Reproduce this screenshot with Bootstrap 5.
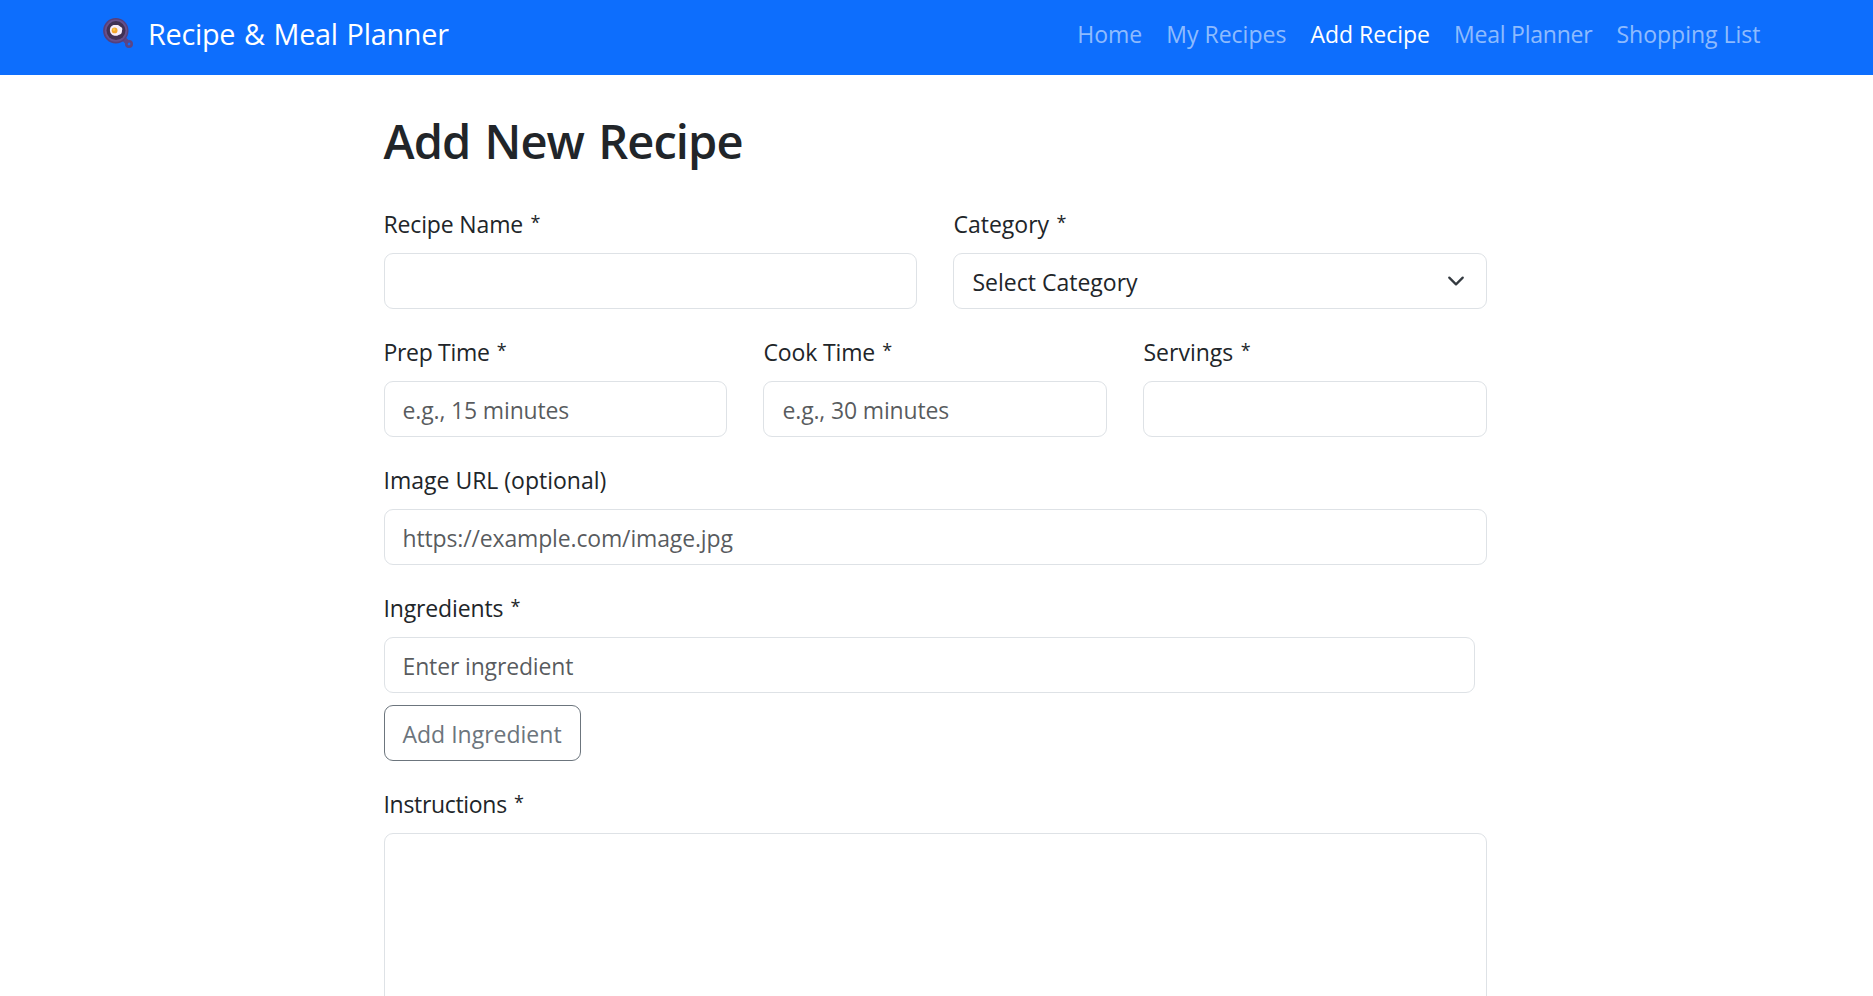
<!DOCTYPE html>
<html lang="en">
<head>
<meta charset="utf-8">
<meta name="viewport" content="width=device-width, initial-scale=1">
<title>Recipe &amp; Meal Planner</title>
<link href="https://cdn.jsdelivr.net/npm/bootstrap@5.3.0/dist/css/bootstrap.min.css" rel="stylesheet">
<style>
  html { font-size: 24px; overflow: hidden; }
  body { font-family: "Open Sans", "Noto Sans", sans-serif; height: 100vh; overflow: hidden; }
  .page-width { max-width: 1710px; position: relative; left: -1px; }
  .site-nav { height: 75px; padding-top: 3px; --bs-navbar-nav-link-padding-x: .5rem; }
  .form-label, .form-control, .form-select, .nav-link, .btn { font-size: 23px; line-height: 36px; }
  .form-label { padding-top: 1px; margin-bottom: 11px; letter-spacing: -.15px; }
  .form-control { letter-spacing: -.15px; }
  .form-control, .form-select, .btn { padding-top: 10px; padding-bottom: 8px; }
  .form-select { background-size: 24px 18px; }
  .nav-link { padding-top: 13px; padding-bottom: 11px; }
  .tight { letter-spacing: -.32px; }
  .loose { letter-spacing: 0; }
  .snug { letter-spacing: -.22px; }
  .star { font-size: 18px; line-height: 0; vertical-align: 4px; margin-left: 1.5px; }
  .navbar-brand { font-size: 28.8px; line-height: 45px; letter-spacing: -.25px; word-spacing: 1.5px; }
  .page-title { font-size: 47px; line-height: 57.6px; font-weight: 600; letter-spacing: -.9px; word-spacing: 2.8px; padding-top: 2px; margin-bottom: 34px; }
  .form-control::placeholder { color: rgba(33,37,41,.75); }
  .pan { width: 30px; height: 30px; margin: 0 15px 0 4.5px; }
</style>
</head>
<body>
<nav class="navbar navbar-expand-lg navbar-dark bg-primary site-nav">
  <div class="container page-width">
    <a class="navbar-brand d-flex align-items-center" href="#">
      <svg class="pan" viewBox="0 0 30 30" aria-hidden="true">
        <path d="M20.500 20.500l3 3" stroke="#5b4585" stroke-width="4.600" stroke-linecap="round"/>
        <circle cx="26" cy="26" r="2.700" fill="none" stroke="#5b4585" stroke-width="2.600"/>
        <circle cx="12.800" cy="12.800" r="12.700" fill="#56407c"/>
        <circle cx="13" cy="12.600" r="11.200" fill="#66508c"/>
        <circle cx="13" cy="12.600" r="9.500" fill="#403156"/>
        <path d="M7 13c-.5-3.600 2-6.400 5.400-5.900 2.200-.5 4.100.2 4.700 1.400 1.900.6 2.800 2.400 1.900 4 .2 2.700-1.300 4.400-3.500 4.400-2.100 1.700-7.700 1.200-8.500-3.900z" fill="#f6edfb"/>
        <circle cx="11.600" cy="12.400" r="2.900" fill="#f3a72c"/>
        <circle cx="11" cy="11.600" r="1.300" fill="#fcc84e"/>
      </svg>
      <span>Recipe &amp; Meal Planner</span>
    </a>
    <ul class="navbar-nav ms-auto">
      <li class="nav-item"><a class="nav-link" href="#">Home</a></li>
      <li class="nav-item"><a class="nav-link" href="#">My Recipes</a></li>
      <li class="nav-item"><a class="nav-link active" href="#">Add Recipe</a></li>
      <li class="nav-item"><a class="nav-link snug" href="#">Meal Planner</a></li>
      <li class="nav-item"><a class="nav-link" href="#">Shopping List</a></li>
    </ul>
  </div>
</nav>
<main class="container page-width mt-4">
  <div class="row justify-content-center">
    <div class="col-md-8">
      <h2 class="page-title">Add New Recipe</h2>
      <form>
        <div class="row">
          <div class="col-md-6 mb-3"><label class="form-label" for="name">Recipe Name <span class="star">*</span></label><input class="form-control" id="name"></div>
          <div class="col-md-6 mb-3"><label class="form-label loose" for="cat">Category <span class="star">*</span></label><select class="form-select" id="cat"><option>Select Category</option></select></div>
        </div>
        <div class="row">
          <div class="col-md-4 mb-3"><label class="form-label tight" for="prep">Prep Time <span class="star">*</span></label><input class="form-control" id="prep" placeholder="e.g., 15 minutes"></div>
          <div class="col-md-4 mb-3"><label class="form-label" for="cook">Cook Time <span class="star">*</span></label><input class="form-control" id="cook" placeholder="e.g., 30 minutes"></div>
          <div class="col-md-4 mb-3"><label class="form-label loose" for="serv">Servings <span class="star">*</span></label><input class="form-control" id="serv"></div>
        </div>
        <div class="mb-3"><label class="form-label loose" for="img">Image URL (optional)</label><input class="form-control" id="img" placeholder="https://example.com/image.jpg"></div>
        <div class="mb-3">
          <label class="form-label" for="ing">Ingredients <span class="star">*</span></label>
          <div class="d-flex mb-2"><input class="form-control me-2" id="ing" placeholder="Enter ingredient"></div>
          <button type="button" class="btn btn-outline-secondary">Add Ingredient</button>
        </div>
        <div class="mb-3"><label class="form-label tight" for="steps">Instructions <span class="star">*</span></label><textarea class="form-control" id="steps" rows="6"></textarea></div>
      </form>
    </div>
  </div>
</main>
<script src="https://cdn.jsdelivr.net/npm/bootstrap@5.3.0/dist/js/bootstrap.bundle.min.js"></script>
</body>
</html>
